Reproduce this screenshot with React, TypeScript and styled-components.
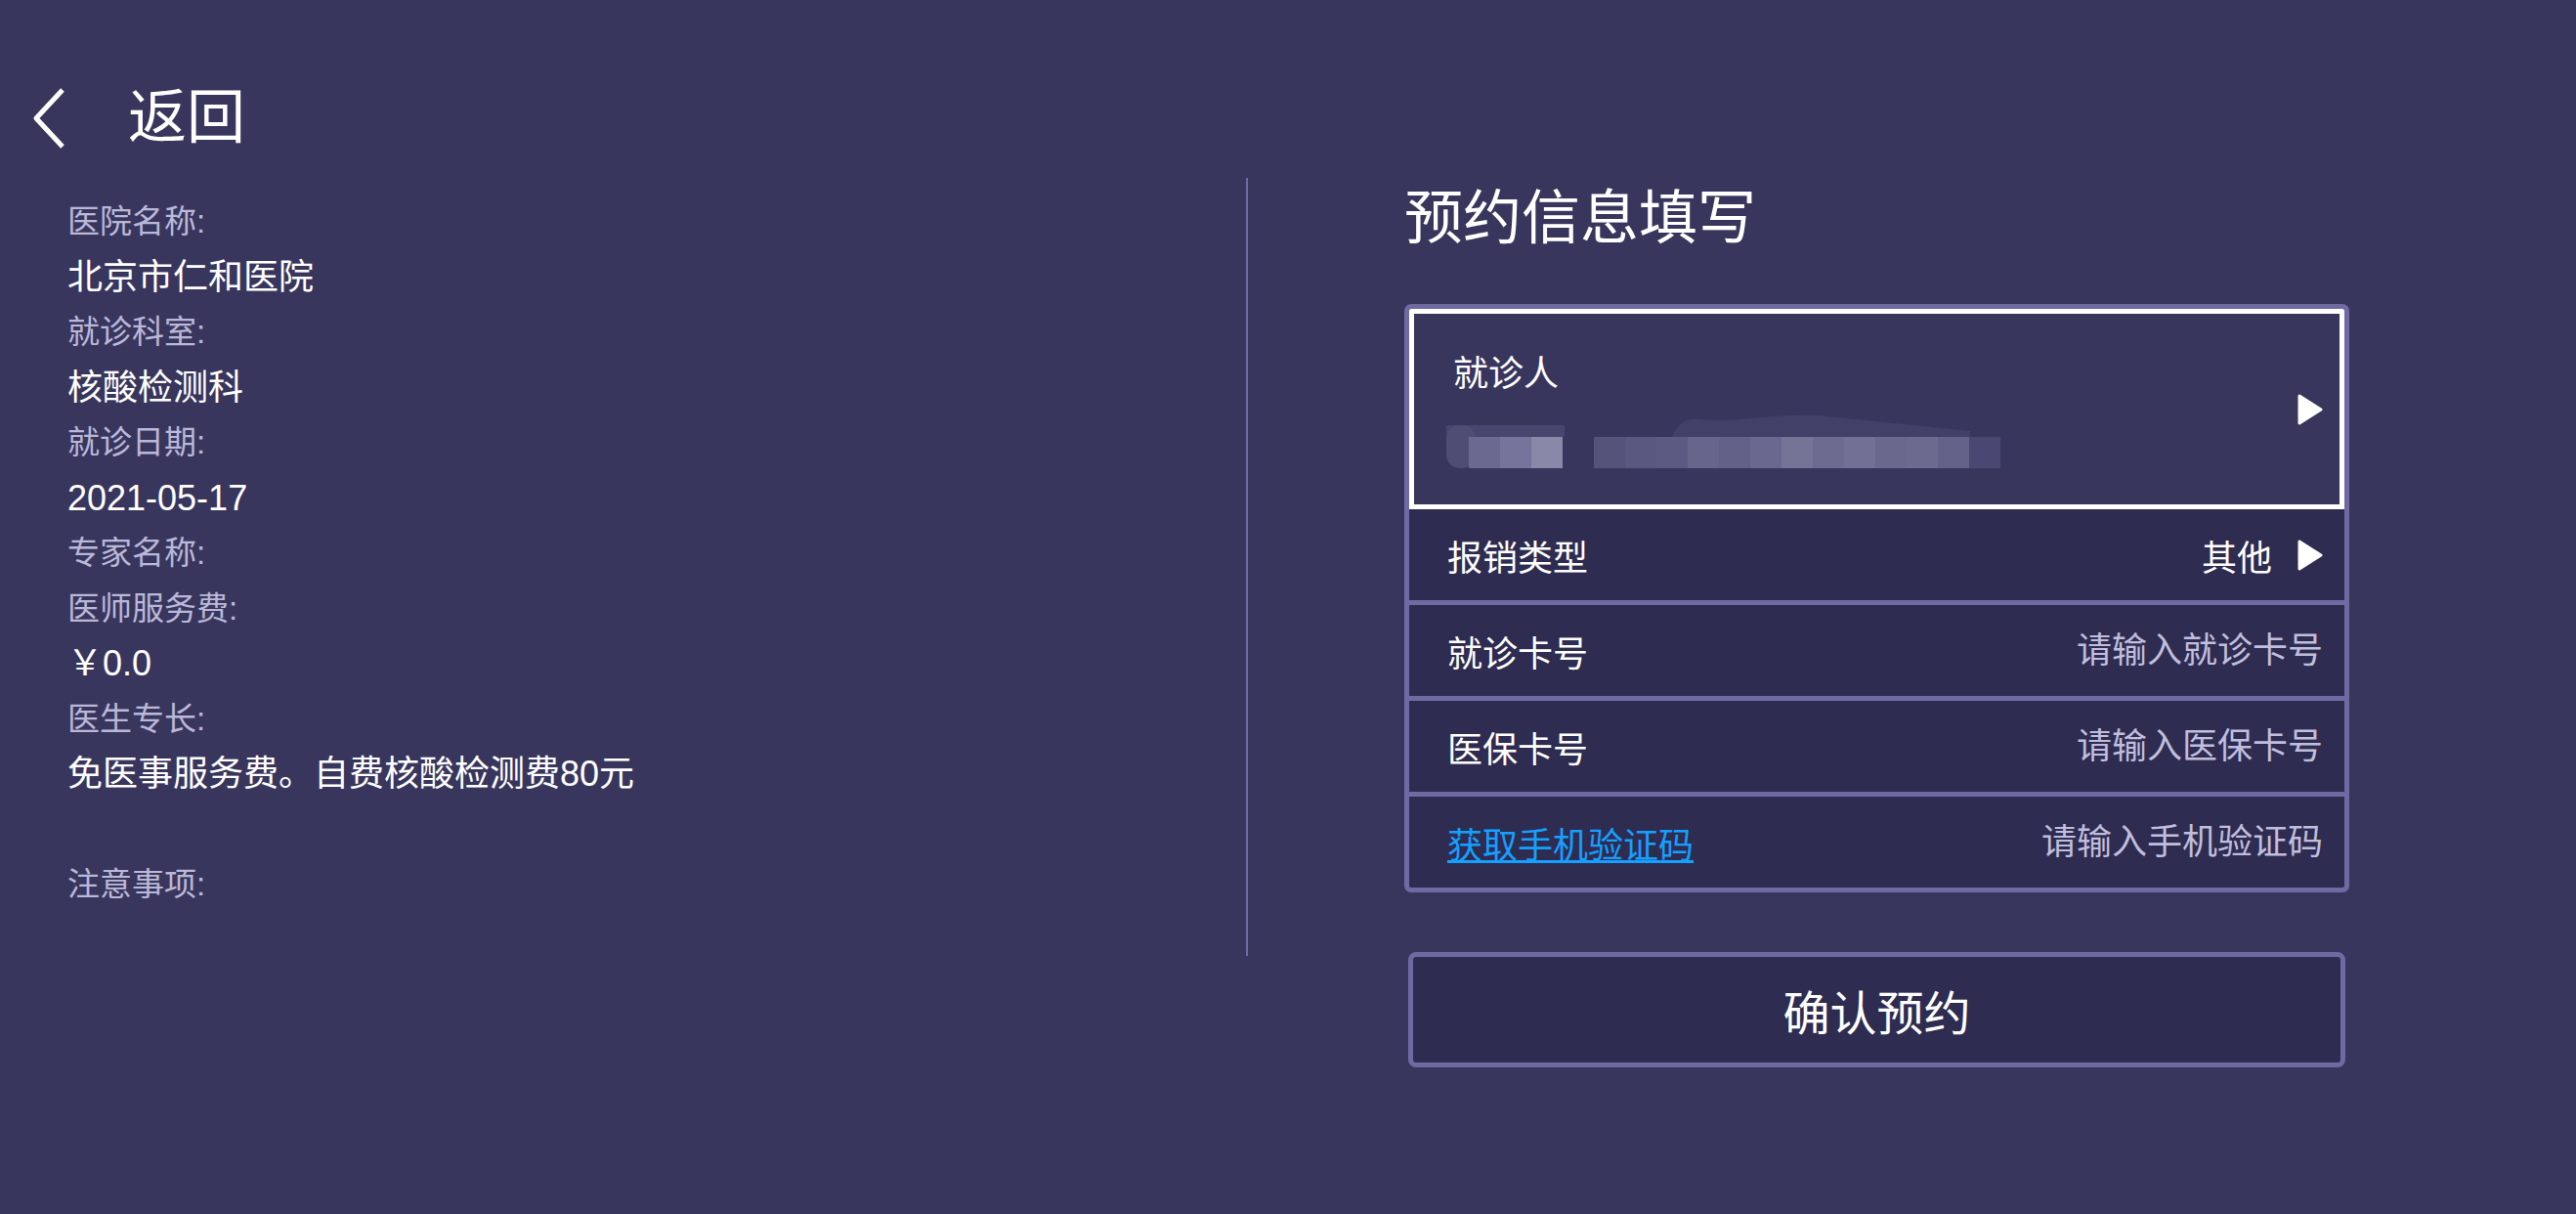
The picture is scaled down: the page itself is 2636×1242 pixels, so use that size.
import styled, { createGlobalStyle } from "styled-components";

const GlobalStyle = createGlobalStyle`
  html, body {
    margin: 0;
    padding: 0;
    background: #39365e;
  }
  body {
    font-family: "Liberation Sans", "Noto Sans CJK SC", sans-serif;
    color: #ffffff;
  }
`;

const info = [
  { label: "医院名称:", value: "北京市仁和医院" },
  { label: "就诊科室:", value: "核酸检测科" },
  { label: "就诊日期:", value: "2021-05-17" },
  { label: "专家名称:", value: "" },
  { label: "医师服务费:", value: "￥0.0" },
  { label: "医生专长:", value: "免医事服务费。自费核酸检测费80元" },
];

const fields = [
  { label: "就诊卡号", placeholder: "请输入就诊卡号" },
  { label: "医保卡号", placeholder: "请输入医保卡号" },
];

// pixelated blur over the patient name / id
const blurCells = [
  { x: 23, c: "#6b6990" },
  { x: 55, c: "#76749a" },
  { x: 87, c: "#8a88a8" },
  { x: 151, c: "#55537a" },
  { x: 183, c: "#5a5880" },
  { x: 215, c: "#5c5a82" },
  { x: 247, c: "#67658b" },
  { x: 279, c: "#636188" },
  { x: 311, c: "#6a688e" },
  { x: 343, c: "#757396" },
  { x: 375, c: "#6d6b90" },
  { x: 407, c: "#727095" },
  { x: 439, c: "#6a688d" },
  { x: 471, c: "#6c6a8f" },
  { x: 503, c: "#646288" },
  { x: 535, c: "#4a4872" },
];

const App = () => {
  return (
    <Page>
      <GlobalStyle />
      <Header>
        <svg width="36" height="64" viewBox="0 0 36 64">
          <polyline
            points="32,3 5,32 32,61"
            fill="none"
            stroke="#ffffff"
            strokeWidth="5"
            strokeLinejoin="round"
          />
        </svg>
        <BackText>返回</BackText>
      </Header>
      <Body>
        <InfoColumn>
          {info.map((item) => (
            <InfoItem key={item.label}>
              <InfoLabel>{item.label}</InfoLabel>
              {item.value && <InfoValue>{item.value}</InfoValue>}
            </InfoItem>
          ))}
          <Spacer />
          <InfoLabel>注意事项:</InfoLabel>
        </InfoColumn>
        <Divider />
        <FormColumn>
          <Title>预约信息填写</Title>
          <Card>
            <PatientRow>
              <PatientInfo>
                <PatientLabel>就诊人</PatientLabel>
                <BlurBar width="570" height="59" viewBox="0 0 570 59">
                  <path
                    d="M231 24 C236 8 250 4 262 6 C300 10 330 0 380 2 L536 18 L536 24 Z"
                    fill="#423f69"
                  />
                  <rect x="0" y="12" width="121" height="12" rx="2" fill="#48466e" />
                  <rect x="0" y="12" width="30" height="44" rx="14" fill="#4f4d74" />
                  {blurCells.map((cell) => (
                    <rect key={cell.x} x={cell.x} y="24" width="32" height="32" fill={cell.c} />
                  ))}
                </BlurBar>
              </PatientInfo>
              <Arrow />
            </PatientRow>
            <FieldRow>
              <FieldLabel>报销类型</FieldLabel>
              <FieldRight>
                <FieldValue>其他</FieldValue>
                <Arrow />
              </FieldRight>
            </FieldRow>
            {fields.map((f) => (
              <FieldRow key={f.label} $divided>
                <FieldLabel>{f.label}</FieldLabel>
                <FieldInput placeholder={f.placeholder} />
              </FieldRow>
            ))}
            <FieldRow $divided>
              <CodeLink href="#">获取手机验证码</CodeLink>
              <FieldInput placeholder="请输入手机验证码" />
            </FieldRow>
          </Card>
          <ConfirmButton>确认预约</ConfirmButton>
        </FormColumn>
      </Body>
    </Page>
  );
};

const Arrow = () => (
  <svg width="26" height="32" viewBox="0 0 26 32">
    <polygon
      points="2,2 24,16 2,30"
      fill="#ffffff"
      stroke="#ffffff"
      strokeWidth="3"
      strokeLinejoin="round"
    />
  </svg>
);

export default App;

// styles
const Page = styled.div`
  min-height: 100vh;
  background: #39365e;
`;

const Header = styled.div`
  display: flex;
  align-items: center;
  height: 80px;
  padding: 81px 0 0 32px;
`;

const BackText = styled.span`
  margin-left: 63px;
  font-size: 60px;
  line-height: 80px;
`;

const Body = styled.div`
  display: flex;
  align-items: flex-start;
  padding: 21px 0 0 69px;
`;

const InfoColumn = styled.div`
  display: flex;
  flex-direction: column;
  width: 1206px;
  padding-top: 17px;
`;

const InfoItem = styled.div`
  display: flex;
  flex-direction: column;
`;

const InfoLabel = styled.div`
  font-size: 33px;
  line-height: 56.5px;
  color: #bab8d8;
`;

const InfoValue = styled.div`
  font-size: 36px;
  line-height: 56.5px;
  color: #ffffff;
`;

const Spacer = styled.div`
  height: 56.5px;
`;

const Divider = styled.div`
  flex-shrink: 0;
  width: 2px;
  height: 796px;
  background: #6f6aa2;
`;

const FormColumn = styled.div`
  display: flex;
  flex-direction: column;
  width: 967px;
  margin-left: 160px;
`;

const Title = styled.h1`
  margin: 2px 0 0;
  font-size: 60px;
  font-weight: normal;
  line-height: 80px;
`;

const Card = styled.div`
  display: flex;
  flex-direction: column;
  margin-top: 47px;
  border: 5px solid #6f6aa2;
  border-radius: 7px;
  background: #2e2c51;
  overflow: hidden;
`;

const PatientRow = styled.div`
  box-sizing: border-box;
  display: flex;
  align-items: center;
  justify-content: space-between;
  height: 205px;
  padding: 0 17px 0 33px;
  border: 5px solid #ffffff;
  background: #39365e;
`;

const PatientInfo = styled.div`
  display: flex;
  flex-direction: column;
  align-self: flex-start;
  padding-top: 40px;
`;

const PatientLabel = styled.div`
  padding-left: 7px;
  font-size: 36px;
  line-height: 44px;
`;

const BlurBar = styled.svg`
  display: block;
  margin-top: 18px;
`;

const FieldRow = styled.div<{ $divided?: boolean }>`
  box-sizing: content-box;
  display: flex;
  align-items: center;
  justify-content: space-between;
  height: 93px;
  padding: 0 22px 0 39px;
  border-top: ${(p) => (p.$divided ? "5px solid #6f6aa2" : "none")};
  font-size: 36px;
`;

const FieldLabel = styled.span`
  color: #ffffff;
  white-space: nowrap;
`;

const FieldRight = styled.div`
  display: flex;
  align-items: center;
  gap: 26px;
`;

const FieldValue = styled.span`
  color: #ffffff;
`;

const FieldInput = styled.input`
  flex: 1;
  min-width: 0;
  margin-left: 40px;
  padding: 0;
  border: none;
  outline: none;
  background: transparent;
  color: #ffffff;
  font-family: inherit;
  font-size: 36px;
  text-align: right;

  &::placeholder {
    color: #c0bedc;
  }
`;

const CodeLink = styled.a`
  color: #14a0ff;
  text-decoration: underline;
  white-space: nowrap;
`;

const ConfirmButton = styled.button`
  box-sizing: border-box;
  width: 959px;
  height: 118px;
  margin: 61px 0 0 4px;
  border: 5px solid #6f6aa2;
  border-radius: 8px;
  background: #2e2c51;
  color: #ffffff;
  font-family: inherit;
  font-size: 48px;
  cursor: pointer;
`;
